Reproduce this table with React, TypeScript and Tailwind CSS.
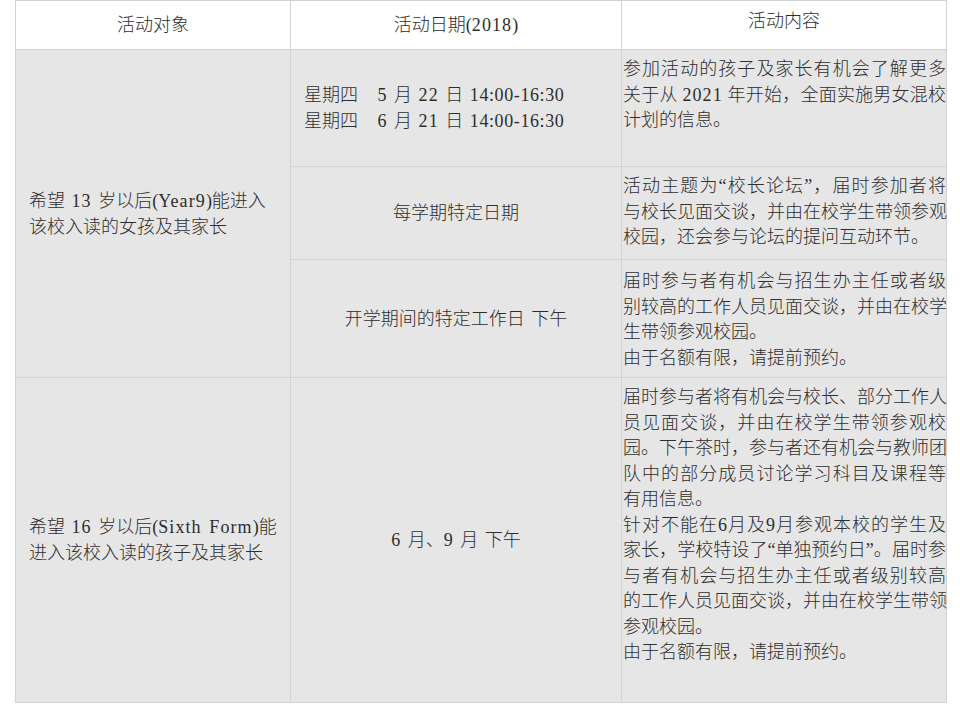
import React from "react";

const L = ({ children }: { children: React.ReactNode }) => (
  <span className="tracking-[1.1px]">{children}</span>
);
const T = ({ children }: { children: React.ReactNode }) => (
  <span className="tracking-[0.6px]">{children}</span>
);

const J = ({ children }: { children: React.ReactNode }) => (
  <div className="whitespace-nowrap text-justify [text-align-last:justify]">{children}</div>
);
const N = ({ children }: { children: React.ReactNode }) => (
  <div className="whitespace-pre">{children}</div>
);

const cell = "border-r border-b border-[#d3d3d3]";
const body = "bg-[#e6e6e6]";
const c3 = "pt-[7px] pl-px leading-[25.5px] [word-spacing:0px]";

export default function App() {
  return (
    <div className="min-h-[727px] bg-white pl-[15px] text-[18px] font-light text-[#2e2e2e] font-['Liberation_Serif','Noto_Sans_CJK_SC',serif] [word-spacing:2px]">
      <div className="grid w-[932px] grid-cols-[275px_331px_325px] grid-rows-[49px_117px_93px_118px_325px] border-l border-t border-[#d3d3d3]">
        {/* header */}
        <div className={`${cell} bg-white col-start-1 row-start-1 flex items-center justify-center leading-[26px]`}>活动对象</div>
        <div className={`${cell} bg-white col-start-2 row-start-1 flex items-center justify-center leading-[26px]`}>
          <span>
            活动日期(<L>2018</L>)
          </span>
        </div>
        <div className={`${cell} bg-white col-start-3 row-start-1 text-center pt-[7px] leading-[26px]`}>活动内容</div>

        {/* row 1 col 1 */}
        <div className={`${cell} ${body} col-start-1 row-start-2 row-span-3 flex items-center pl-[13px] leading-[26px]`}>
          <div>
            <N>
              希望 <L>13</L> 岁以后(<L>Year9</L>)能进入
            </N>
            <N>该校入读的女孩及其家长</N>
          </div>
        </div>

        {/* sub 1 */}
        <div className={`${cell} ${body} col-start-2 row-start-2 flex items-center pl-[13px] leading-[26px]`}>
          <div>
            <N>
              星期四   <L>5</L> 月 <L>22</L> 日 <T>14:00-16:30</T>
            </N>
            <N>
              星期四   <L>6</L> 月 <L>21</L> 日 <T>14:00-16:30</T>
            </N>
          </div>
        </div>
        <div className={`${cell} ${body} col-start-3 row-start-2 ${c3}`}>
          <J>参加活动的孩子及家长有机会了解更多</J>
          <J>
            关于从 <L>2021</L> 年开始，全面实施男女混校
          </J>
          <N>计划的信息。</N>
        </div>

        {/* sub 2 */}
        <div className={`${cell} ${body} col-start-2 row-start-3 flex items-center justify-center leading-[26px]`}>每学期特定日期</div>
        <div className={`${cell} ${body} col-start-3 row-start-3 ${c3}`}>
          <J>活动主题为“校长论坛”，届时参加者将</J>
          <J>与校长见面交谈，并由在校学生带领参观</J>
          <N>校园，还会参与论坛的提问互动环节。</N>
        </div>

        {/* sub 3 */}
        <div className={`${cell} ${body} col-start-2 row-start-4 flex items-center justify-center leading-[26px]`}>
          <span className="whitespace-pre">开学期间的特定工作日 下午</span>
        </div>
        <div className={`${cell} ${body} col-start-3 row-start-4 ${c3} pt-[9px]`}>
          <J>届时参与者有机会与招生办主任或者级</J>
          <J>别较高的工作人员见面交谈，并由在校学</J>
          <N>生带领参观校园。</N>
          <N>由于名额有限，请提前预约。</N>
        </div>

        {/* row 2 */}
        <div className={`${cell} ${body} col-start-1 row-start-5 flex items-center pl-[13px] leading-[26px]`}>
          <div>
            <N>
              希望 <L>16</L> 岁以后(<L>Sixth Form</L>)能
            </N>
            <N>进入该校入读的孩子及其家长</N>
          </div>
        </div>
        <div className={`${cell} ${body} col-start-2 row-start-5 flex items-center justify-center leading-[26px]`}>
          <span className="whitespace-pre">
            <L>6</L> 月、<L>9</L> 月 下午
          </span>
        </div>
        <div className={`${cell} ${body} col-start-3 row-start-5 ${c3}`}>
          <J>届时参与者将有机会与校长、部分工作人</J>
          <J>员见面交谈，并由在校学生带领参观校</J>
          <J>园。下午茶时，参与者还有机会与教师团</J>
          <J>队中的部分成员讨论学习科目及课程等</J>
          <N>有用信息。</N>
          <J>针对不能在6月及9月参观本校的学生及</J>
          <J>家长，学校特设了“单独预约日”。届时参</J>
          <J>与者有机会与招生办主任或者级别较高</J>
          <J>的工作人员见面交谈，并由在校学生带领</J>
          <N>参观校园。</N>
          <N>由于名额有限，请提前预约。</N>
        </div>
      </div>
    </div>
  );
}
